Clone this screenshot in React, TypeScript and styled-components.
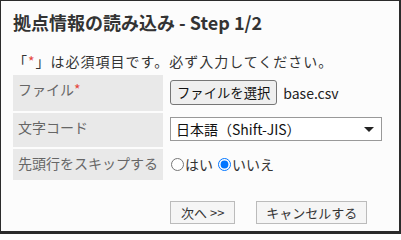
import React, { useState } from 'react';
import styled, { createGlobalStyle } from 'styled-components';

const GlobalStyle = createGlobalStyle`
    html, body {
        margin: 0;
        padding: 0;
    }
    body {
        font-family: "Noto Sans CJK JP", "Open Sans", sans-serif;
        color: #333;
    }
`;

const Frame = styled.div`
    box-sizing: border-box;
    width: 401px;
    height: 234px;
    background: #fcfcfc;
    border-style: solid;
    border-color: #2b2b2b;
    border-width: 1px 2px 3px 1px;
    padding: 0 0 0 12px;
    overflow: hidden;
`;

const Title = styled.h1`
    margin: 9px 0 0;
    font-size: 18px;
    line-height: 24px;
    font-weight: bold;
    color: #333;
`;

const Notice = styled.p`
    margin: 17px 0 4px 0;
    font-size: 14px;
    line-height: 20px;
    letter-spacing: 1px;
`;

const Required = styled.span`
    color: #e5463c;
`;

const FormGrid = styled.div`
    display: grid;
    grid-template-columns: 150px 1fr;
    column-gap: 7px;
    row-gap: 2px;
    width: 370px;
`;

const Label = styled.div`
    background: #e9e9e9;
    padding: 4px 5px 0;
    font-size: 14px;
    line-height: 20px;
    color: #666;
`;

const Value = styled.div<{ top?: number }>`
    display: flex;
    align-items: center;
    padding: ${p => p.top ?? 5}px 0 6px;
    font-size: 14px;
    line-height: 20px;
`;

const FileButton = styled.button`
    box-sizing: border-box;
    height: 25px;
    padding: 0 6px;
    border: 1px solid #767676;
    border-radius: 3px;
    background: #efefef;
    font-family: inherit;
    font-size: 13.33px;
    color: #111;
`;

const FileName = styled.span`
    margin-left: 6px;
    color: #222;
`;

const SelectBox = styled.div`
    box-sizing: border-box;
    width: 212px;
    height: 24px;
    border: 1px solid #999;
    background: #fff;
    display: flex;
    align-items: center;
    justify-content: space-between;
    padding: 0 5px 0 5px;
    color: #111;
`;

const Caret = styled.span`
    width: 0;
    height: 0;
    border-left: 5px solid transparent;
    border-right: 5px solid transparent;
    border-top: 5px solid #222;
    margin-right: 2px;
`;

const RadioLabel = styled.label`
    display: flex;
    align-items: center;
    margin-right: 4px;
    color: #333;

    input {
        margin: 0 1px 0 1px;
        width: 13px;
        height: 13px;
    }
`;

const Actions = styled.div`
    display: flex;
    gap: 21px;
    margin: 21px 0 0 157px;
`;

const ActionButton = styled.button<{ pad?: number }>`
    box-sizing: border-box;
    height: 23px;
    padding: 0 ${p => p.pad ?? 9}px;
    border: 1px solid #bbb;
    background: #f5f5f5;
    font-family: inherit;
    font-size: 13px;
    line-height: 20px;
    color: #333;
`;

const App: React.FC = () => {
    let [skip, setSkip] = useState('no');

    return (
        <>
            <GlobalStyle />
            <Frame>
                <Title>拠点情報の読み込み - Step 1/2</Title>
                <Notice>「<Required>*</Required>」は必須項目です。必ず入力してください。</Notice>
                <FormGrid>
                    <Label>ファイル<Required>*</Required></Label>
                    <Value>
                        <FileButton>ファイルを選択</FileButton>
                        <FileName>base.csv</FileName>
                    </Value>
                    <Label>文字コード</Label>
                    <Value top={4}>
                        <SelectBox>
                            <span>日本語（Shift-JIS）</span>
                            <Caret />
                        </SelectBox>
                    </Value>
                    <Label>先頭行をスキップする</Label>
                    <Value>
                        <RadioLabel>
                            <input type="radio" name="skip" checked={skip === 'yes'} onChange={() => setSkip('yes')} />
                            はい
                        </RadioLabel>
                        <RadioLabel>
                            <input type="radio" name="skip" checked={skip === 'no'} onChange={() => setSkip('no')} />
                            いいえ
                        </RadioLabel>
                    </Value>
                </FormGrid>
                <Actions>
                    <ActionButton pad={10}>次へ &gt;&gt;</ActionButton>
                    <ActionButton>キャンセルする</ActionButton>
                </Actions>
            </Frame>
        </>
    );
};

export default App;
